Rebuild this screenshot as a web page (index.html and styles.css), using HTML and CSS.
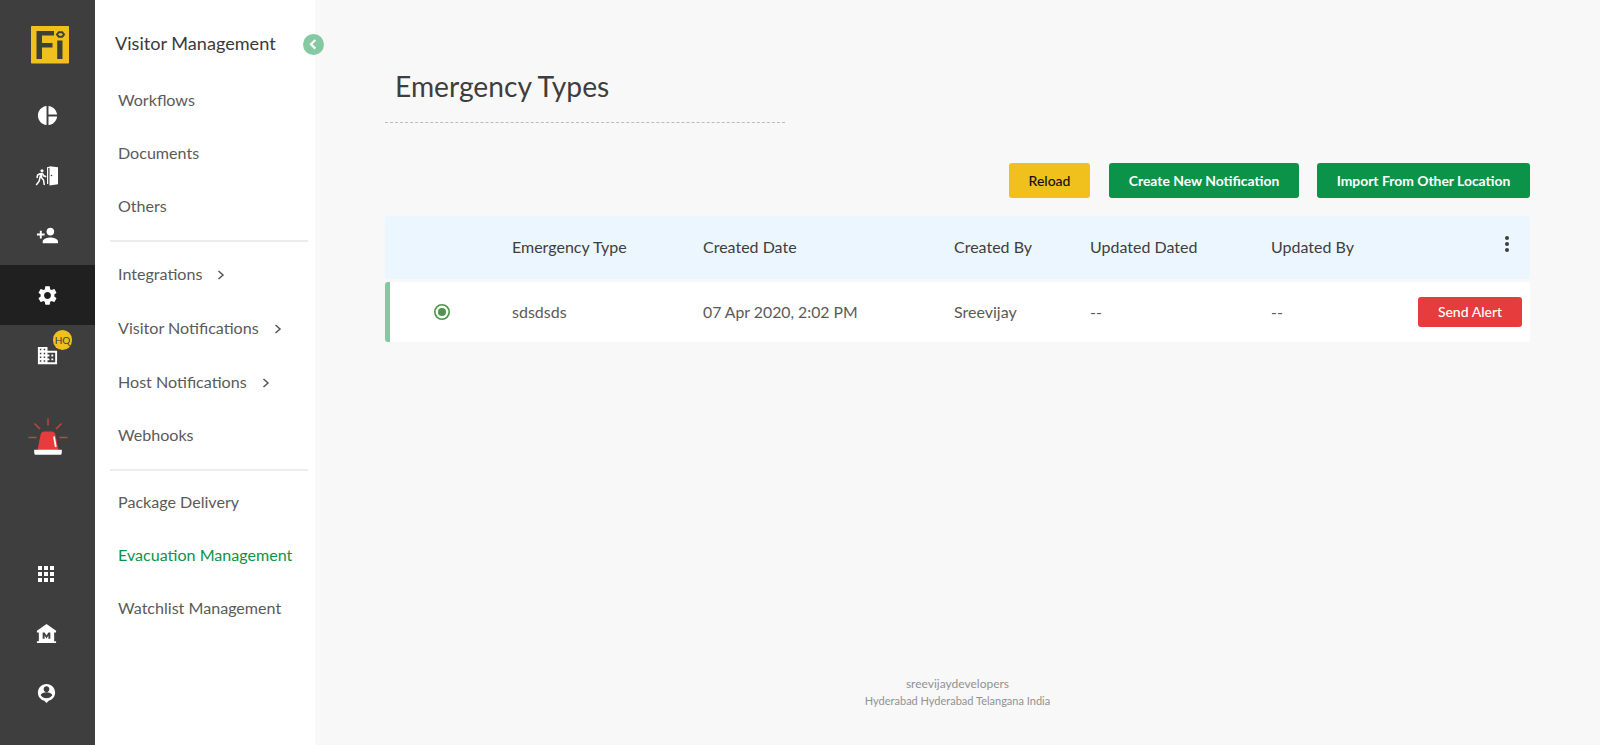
FILE: index.html
```html
<!DOCTYPE html>
<html lang="en">
<head>
<meta charset="utf-8">
<title>Emergency Types</title>
<link rel="stylesheet" href="styles.css">
</head>
<body>
<div class="app">
  <nav class="rail">
    <div class="logo">
      <svg width="40" height="40" viewBox="0 0 40 40"><rect x="1" y="1" width="38" height="37.500" rx=".8" fill="#f0c01c"/><path fill="#3e3e3e" d="M6.500 6H24v4.500H12V18h10.500v4.500H12V34H6.500zM27.200 15.500h5.300V34h-5.300z"/><path d="M27 9.500L28.800 7.200h3.400L34 9.500l-1.800 2.300h-3.400z" fill="none" stroke="#3e3e3e" stroke-width="2"/></svg>
    </div>
    <a class="slot"><svg width="23" height="23" viewBox="0 0 24 24"><path d="M11 2v20c-5.070-.5-9-4.790-9-10s3.930-9.500 9-10zm2.030 0v8.990H22c-.47-4.740-4.240-8.520-8.970-8.990zm0 11.010V22c4.740-.47 8.500-4.250 8.970-8.990h-8.970z"/></svg></a>
    <a class="slot"><svg width="24" height="22" viewBox="0 0 24 22"><circle cx="7" cy="5.800" r="1.600"/><path d="M5.200 8h2.600l-.8 5H4.200z"/><path d="M6.500 12.500l2 2.500.8 5M5 12.500l-1 4L1.200 20M5.500 8.500L2.600 10l-.6 3M7.500 8.500l1.200 2.300 2.500 1" fill="none" stroke="#fff" stroke-width="1.500"/><path d="M12 2.200L15 1.500v1l-1.800.4V19H12zM14.500 1.200l8.500 1v17l-8.500 1.300z"/><circle cx="16.500" cy="10.500" r=".8" fill="#3e3e3e"/></svg></a>
    <a class="slot"><svg width="23" height="23" viewBox="0 0 24 24"><path d="M15 12c2.210 0 4-1.790 4-4s-1.790-4-4-4-4 1.790-4 4 1.790 4 4 4zm-9-2V7H4v3H1v2h3v3h2v-3h3v-2H6zm9 4c-2.670 0-8 1.340-8 4v2h16v-2c0-2.660-5.330-4-8-4z"/></svg></a>
    <a class="slot slot-active"><svg width="23" height="23" viewBox="0 0 24 24"><path d="M19.140 12.940c.04-.3.060-.61.060-.94 0-.32-.02-.64-.07-.94l2.030-1.580c.18-.14.230-.41.120-.61l-1.920-3.320c-.12-.22-.37-.29-.59-.22l-2.390.96c-.5-.38-1.030-.7-1.620-.94l-.36-2.540c-.04-.24-.24-.41-.48-.41h-3.840c-.24 0-.43.170-.47.410l-.36 2.540c-.59.240-1.130.570-1.620.940l-2.390-.96c-.22-.08-.47 0-.59.220L2.740 8.870c-.12.210-.08.470.120.610l2.030 1.580c-.05.300-.09.630-.09.940s.02.640.070.940l-2.030 1.580c-.18.140-.23.410-.12.610l1.920 3.320c.12.220.37.290.59.220l2.390-.96c.5.380 1.030.7 1.620.94l.36 2.540c.05.240.240.410.48.410h3.840c.24 0 .44-.17.470-.41l.36-2.540c.59-.24 1.130-.56 1.620-.94l2.390.96c.22.080.47 0 .59-.22l1.920-3.320c.12-.22.070-.47-.12-.61l-2.010-1.580zM12 15.600c-1.980 0-3.600-1.620-3.600-3.600s1.620-3.600 3.600-3.600 3.600 1.620 3.600 3.600-1.620 3.600-3.600 3.600z"/></svg></a>
    <a class="slot"><svg width="23" height="23" viewBox="0 0 24 24"><path fill-rule="evenodd" d="M2 3h10v4h10v14H2zM4 5v1.600h1.600V5zM8 5v1.600h1.600V5zM4 9v1.600h1.600V9zM8 9v1.600h1.600V9zM4 13v1.600h1.600V13zM8 13v1.600h1.600V13zM4 17v1.600h1.600V17zM8 17v1.600h1.600V17zM12 9v2h2v2h-2v2h2v2h-2v2h8V9zM16 11h2v2h-2zM16 15h2v2h-2z"/></svg><span class="badge">HQ</span></a>
    <a class="siren"><svg width="40" height="38" viewBox="0 0 40 38"><path d="M20 .5v7M6.500 5.500L12 11M33.500 5.500L28 11M.5 19.500H8.500M31.500 19.500h8" stroke="#c94043" stroke-width="1.500"/><path fill="#e63c3e" d="M9.500 32l3-15q.6-3.500 4-3.500h7q3.400 0 4 3.500l3 15z"/><path d="M26 18.500l1.800 10.500" stroke="#fff" stroke-width="1.700"/><path fill="#fff" d="M6.200 31.800h27.600v2.700l-.6 2.200H6.800l-.6-2.200z"/></svg></a>
    <div class="rail-bottom">
      <a class="slot"><svg width="24" height="24" viewBox="0 0 24 24"><path d="M4 8h4V4H4v4zm6 12h4v-4h-4v4zm-6 0h4v-4H4v4zm0-6h4v-4H4v4zm6 0h4v-4h-4v4zm6-10v4h4V4h-4zm-6 4h4V4h-4v4zm6 6h4v-4h-4v4zm0 6h4v-4h-4v4z"/></svg></a>
      <a class="slot"><svg width="23" height="23" viewBox="0 0 24 24"><path fill-rule="evenodd" d="M22 11V9L12 2 2 9v2h2v9H2v2h20v-2h-2v-9zM8 17.500V11h2l2 3 2-3h2v6.500h-2v-3.300l-2 3-2-3v3.300z"/></svg></a>
      <a class="slot"><svg width="23" height="23" viewBox="0 0 24 24"><path d="M12 2C7.030 2 3 6.030 3 11c0 4.170 2.840 7.670 6.690 8.690L12 22l2.310-2.310C18.160 18.670 21 15.170 21 11c0-4.970-4.030-9-9-9zm0 2.500c1.660 0 3 1.340 3 3s-1.340 3-3 3-3-1.340-3-3 1.340-3 3-3zm0 12.500c-2.500 0-4.710-1.280-6-3.220.03-1.990 4-3.080 6-3.080s5.970 1.090 6 3.080C16.710 15.720 14.500 17 12 17z"/></svg></a>
    </div>
  </nav>

  <aside class="menu">
    <h2 class="menu-title">Visitor Management</h2>
    <button class="collapse"><svg width="21" height="21" viewBox="0 0 21 21"><path d="M12.300 6L8 10.300l4.300 4.300" fill="none" stroke="#fff" stroke-width="2.200"/></svg></button>
    <div class="menu-group">
      <a class="item">Workflows</a>
      <a class="item">Documents</a>
      <a class="item">Others</a>
    </div>
    <div class="menu-group menu-group-setup">
      <a class="item item-more">Integrations<svg class="chevron" width="8" height="10" viewBox="0 0 8 10"><path d="M1.500 1L6 5 1.500 9"/></svg></a>
      <a class="item item-more">Visitor Notifications<svg class="chevron" width="8" height="10" viewBox="0 0 8 10"><path d="M1.500 1L6 5 1.500 9"/></svg></a>
      <a class="item item-more">Host Notifications<svg class="chevron" width="8" height="10" viewBox="0 0 8 10"><path d="M1.500 1L6 5 1.500 9"/></svg></a>
      <a class="item">Webhooks</a>
    </div>
    <div class="menu-group menu-group-modules">
      <a class="item">Package Delivery</a>
      <a class="item item-current">Evacuation Management</a>
      <a class="item">Watchlist Management</a>
    </div>
  </aside>

  <main class="content">
    <h1 class="page-title">Emergency Types</h1>
    <div class="actions">
      <button class="btn btn-reload">Reload</button>
      <button class="btn btn-create">Create New Notification</button>
      <button class="btn btn-import">Import From Other Location</button>
    </div>
    <div class="table">
      <div class="row head">
        <div></div><div>Emergency Type</div><div>Created Date</div><div>Created By</div><div>Updated Dated</div><div>Updated By</div>
        <div class="more"><svg width="6" height="18" viewBox="0 0 6 18"><circle cx="3" cy="3" r="2"/><circle cx="3" cy="9" r="2"/><circle cx="3" cy="15" r="2"/></svg></div>
      </div>
      <div class="row entry">
        <div class="pick"><svg width="16" height="16" viewBox="0 0 16 16"><circle cx="8" cy="8" r="7.200" fill="none" stroke="#4c9549" stroke-width="1.600"/><circle cx="8" cy="8" r="4" fill="#4c9549"/></svg></div>
        <div>sdsdsds</div><div class="date">07 Apr 2020, 2:02 PM</div><div>Sreevijay</div><div>--</div><div>--</div>
        <div class="alert-cell"><button class="btn btn-alert">Send Alert</button></div>
      </div>
    </div>
    <footer class="footer">
      <div class="org">sreevijaydevelopers</div>
      <div class="place">Hyderabad Hyderabad Telangana India</div>
    </footer>
  </main>
</div>
</body>
</html>
```

FILE: styles.css
```css
* { box-sizing: border-box; }
body { margin: 0; font-family: Lato, "Liberation Sans", sans-serif; font-size: 16px; color: #5a5a5a; background: #f8f8f8; }
button { font-family: inherit; border: 0; padding: 0; }
svg { display: block; }
.app { display: flex; height: 745px; overflow: hidden; }

.rail { width: 95px; background: #3e3e3e; display: flex; flex-direction: column; fill: #fff; }
.logo { height: 85px; padding: 25px 0 0 30px; }
.slot { height: 60px; display: flex; align-items: center; justify-content: center; position: relative; padding: 1px 1px 0 0; }
.slot-active { background: #202020; }
.badge { position: absolute; left: 53px; top: 5px; width: 19px; height: 20px; border-radius: 10px; background: #f0c01c; color: #3e3e3e; font-size: 10px; line-height: 21px; text-align: center; }
.siren { padding: 33px 0 0 28px; }
.rail-bottom { margin-top: auto; padding: 0 2px 22px 0; }

.menu { width: 220px; background: #fff; position: relative; padding: 0 7px 0 15px; }
.menu-title { margin: 0; height: 73px; padding: 31px 0 0 5px; font-size: 18.1px; line-height: 24px; font-weight: 400; color: #3a3a3a; }
.collapse { position: absolute; left: 208px; top: 34px; width: 21px; height: 21px; border-radius: 50%; background: #84c9a2; }
.menu-group { padding-bottom: 8px; }
.menu-group-setup { border-top: 2px solid #ececec; padding-top: 5px; }
.menu-group-setup .item:last-child { margin-top: -1px; }
.menu-group-modules { border-top: 2px solid #ececec; padding-top: 4px; }
.item { display: flex; align-items: center; height: 53px; padding-left: 8px; font-size: 16.080px; line-height: 20px; }
.item-more { height: 54px; }
.item-current { color: #0b9449; }
.chevron { margin: 2px 0 0 15px; fill: none; stroke: #555; stroke-width: 1.500; }

.content { flex: 1; padding: 0 70px; display: flex; flex-direction: column; }
.page-title { margin: 0; width: 400px; height: 123px; border-bottom: 1px dashed #bbb; padding: 68px 0 0 10px; font-size: 28.200px; line-height: 36px; font-weight: 400; color: #3e3e3e; }
.actions { display: flex; justify-content: flex-end; margin-top: 40px; }
.btn { height: 35px; border-radius: 3px; font-size: 14px; font-weight: 500; color: #fff; text-align: center; white-space: nowrap; }
.btn-reload { width: 81px; background: #f0c01c; color: #111; }
.btn-create { width: 190px; background: #0b9449; margin: 0 18px 0 19px; font-size: 13.900px; font-weight: 700; }
.btn-import { width: 213px; background: #0b9449; font-size: 13.900px; font-weight: 700; }
.btn-alert { width: 104px; height: 30px; padding-bottom: 2px; background: #e63c3e; }

.table { margin-top: 18px; display: grid; gap: 3px; }
.row { display: grid; grid-template-columns: 122px 191px 251px 136px 181px 144px 120px; align-items: center; border-radius: 3px; }
.row > div { padding: 0 0 2px 5px; }
.head { height: 63px; background: #ebf6ff; color: #3e3e3e; }
.entry { height: 60px; background: #fff; border-left: 5px solid #84c9a2; grid-template-columns: 117px 191px 251px 136px 181px 144px 120px; }
.entry > .date { font-size: 15.800px; }
.row > .more { padding: 0 0 7px 94px; fill: #3e3e3e; }
.row > .pick { padding: 0 0 0 44px; }
.row > .alert-cell { padding: 0 0 0 8px; }

.footer { margin-top: auto; padding-bottom: 36px; text-align: center; color: #929292; }
.org { font-size: 12px; line-height: 17px; }
.place { font-size: 11px; line-height: 17px; }
```
